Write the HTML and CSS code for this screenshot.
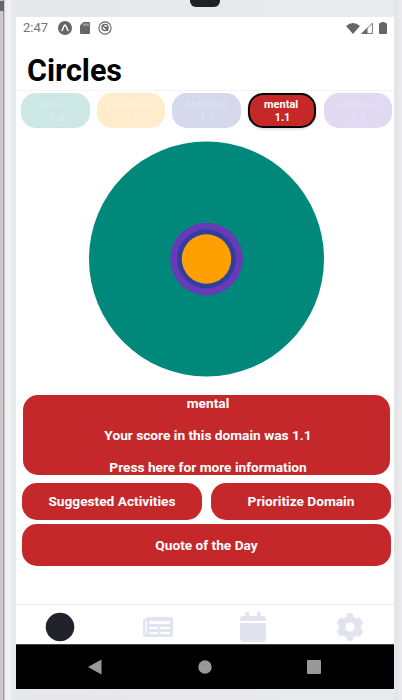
FILE: index.html
```html
<!DOCTYPE html>
<html lang="en">
<head>
<meta charset="utf-8">
<title>Circles</title>
<link rel="stylesheet" href="styles.css">
</head>
<body>
<div class="device">
  <div class="bezel"><div class="camera"></div></div>
  <main class="screen">
    <div class="status">
      <span class="time">2:47</span>
      <svg class="st-expo" width="14" height="14" viewBox="0 0 14 14"><circle cx="7" cy="7" r="7" fill="#666"/><path d="M3.800 10 L6.400 4.200 H7.600 L10.200 10" fill="none" stroke="#fff" stroke-width="1.500" stroke-linejoin="round"/></svg>
      <svg class="st-sd" width="10" height="12" viewBox="0 0 10 12"><path d="M3.500 0H9a1 1 0 0 1 1 1v10a1 1 0 0 1-1 1H1a1 1 0 0 1-1-1V3.500z" fill="#666"/><path d="M4 1.500v2.300M6 1.500v2.300M8 1.500v2.300" stroke="#ddd" stroke-width=".9"/></svg>
      <svg class="st-sync" width="14" height="14" viewBox="0 0 14 14" fill="none" stroke="#666"><circle cx="7" cy="7" r="6.100" stroke-width="1.100"/><circle cx="7" cy="6.500" r="3.100" stroke-width="1.300"/><path d="M4.800 4.500l5.400 5.200M7 6.500h2.500" stroke-width="1.300"/></svg>
      <svg class="st-wifi" width="14" height="11" viewBox="0 0 14 11"><path d="M0 3Q7-3 14 3L7 11z" fill="#666"/></svg>
      <svg class="st-cell" width="12" height="12" viewBox="0 0 12 12"><path d="M1.200 11.400H11.400V1.200z" fill="none" stroke="#777" stroke-width="1"/><path d="M0 12h6.500V5.500z" fill="#666"/></svg>
      <svg class="st-batt" width="8" height="12" viewBox="0 0 8 12"><path d="M2.200 0h3.600v1H7a1 1 0 0 1 1 1v9a1 1 0 0 1-1 1H1a1 1 0 0 1-1-1V2a1 1 0 0 1 1-1h1.200z" fill="#666"/></svg>
    </div>
    <h1 class="title">Circles</h1>
    <div class="chips">
      <div class="chip social">social<br>&nbsp;&nbsp;6.8</div>
      <div class="chip emotional">emotional<br>&nbsp;&nbsp;1.4</div>
      <div class="chip physical">physical<br>&nbsp;1.7</div>
      <div class="chip mental">mental<br>&nbsp;1.1</div>
      <div class="chip spiritual">spiritual<br>&nbsp;2.1</div>
    </div>
    <svg class="chart" width="237" height="236" viewBox="0 0 237 236">
      <circle cx="118.500" cy="118" r="117.500" fill="#00897b"/>
      <circle cx="118.500" cy="118" r="36.300" fill="#673ab7"/>
      <circle cx="118.500" cy="118" r="29.500" fill="#303f9f"/>
      <circle cx="118.500" cy="118" r="24.700" fill="#ffa000"/>
    </svg>
    <div class="btn info"><span>mental</span><span>Your score in this domain was 1.1</span><span>Press here for more information</span></div>
    <div class="pair">
      <div class="btn">Suggested Activities</div>
      <div class="btn">Prioritize Domain</div>
    </div>
    <div class="btn quote">Quote of the Day</div>
    <nav class="tabs">
      <svg width="30" height="40" viewBox="0 0 30 40"><circle cx="15" cy="22" r="14.300" fill="#22222d"/></svg>
      <svg width="30" height="40" viewBox="0 0 30 40"><path fill="#e1e3ef" fill-rule="evenodd" d="M5 12H28a2 2 0 0 1 2 2V30a2 2 0 0 1-2 2H3a3 3 0 0 1-3-3V15a1 1 0 0 1 1-1h2a2 2 0 0 1 2-2zM2.500 16v12.500a.6.6 0 0 0 1.200 0V16zM6.500 16v3H27v-3zM6.500 22v2h8.700v-2zM17.500 22v2h9.500v-2zM6.500 27v2h8.700v-2zM17.500 27v2h9.500v-2z"/></svg>
      <svg width="26" height="40" viewBox="0 0 26 40"><path fill="#e1e3ef" d="M0 16v-2a3 3 0 0 1 3-3h2.500V8a1 1 0 0 1 1-1h1.500a1 1 0 0 1 1 1v3h8V8a1 1 0 0 1 1-1h1.500a1 1 0 0 1 1 1v3H23a3 3 0 0 1 3 3v2zM0 18H26V34a3 3 0 0 1-3 3H3a3 3 0 0 1-3-3z"/></svg>
      <svg width="28" height="40" viewBox="0 -6 28 40"><path fill="#e1e3ef" fill-rule="evenodd" d="M11.200 2.600Q14 1.400 16.800 2.600L17.400 6 Q19 6.600 20.300 7.600L23.500 6.400Q26.500 9 27.300 12.200L24.700 14.500Q25 16.200 24.700 17.700L27.300 19.900Q26.300 23.200 23.700 25.700L20.300 24.600Q19 25.600 17.400 26.200L16.800 29.500Q14 30.200 11.200 29.500L10.600 26.200Q9 25.600 7.700 24.600L4.300 25.700Q1.700 23.200.7 19.900L3.300 17.700Q3 16.200 3.300 14.500L.7 12.200Q1.500 9 4.500 6.400L7.700 7.600Q9 6.600 10.600 6zM14 11.500a4.600 4.600 0 1 0 .01 0z"/></svg>
    </nav>
    <div class="sysnav">
      <svg width="14" height="16" viewBox="0 0 14 16"><path d="M0 8L13.500.5v15z" fill="#999"/></svg>
      <svg width="14" height="14" viewBox="0 0 14 14"><circle cx="7" cy="7" r="6.700" fill="#999"/></svg>
      <svg width="14" height="14" viewBox="0 0 14 14"><rect width="14" height="14" rx="1" fill="#999"/></svg>
    </div>
  </main>
</div>
</body>
</html>
```
FILE: styles.css
```css
* { box-sizing: border-box; }
body { margin: 0; font-family: Roboto, sans-serif; }
.device {
  width: 402px;
  height: 700px;
  padding: 0 8px 0 16px;
  overflow: hidden;
  background:
    linear-gradient(#67656b, #67656b) 0 1px / 4px 10px no-repeat,
    linear-gradient(90deg, #c9c1c4 0, #d3cdd0 3px, #8f898c 3px, #a9a4a7 4px, #eeeef0 5px, #f2f2f4 9px, #e7e8ea 14px, #e9eaec 394px, #e3e4e7 395px, #ececef 402px);
}
.bezel { height: 17px; padding-left: 174px; }
.camera { width: 30px; height: 7px; border-radius: 0 0 6px 6px; background: #202126; }
.screen {
  width: 378px;
  height: 672px;
  display: flex;
  flex-direction: column;
  background: #fff;
}
.status { height: 22px; display: flex; align-items: center; padding: 0 7px; color: #737373; }
.time { width: 35px; font-size: 13px; line-height: 22px; }
.st-sd { margin-left: 8px; }
.st-sync { margin-left: 8px; }
.st-wifi { margin-left: auto; }
.st-cell { margin-left: 1px; }
.st-batt { margin-left: 6px; }
.title {
  height: 52px;
  margin: 0;
  padding: 14px 0 0 11px;
  border-bottom: 1px solid #f4f4f6;
  font-size: 30.500px;
  line-height: 35px;
  font-weight: 700;
  color: #000;
}
.chips { display: flex; justify-content: space-between; padding: 2px 2px 0 5px; }
.chip {
  width: 68.500px;
  height: 35px;
  padding: 6px 2px 0 0;
  border-radius: 15px;
  text-align: center;
  font-size: 11px;
  line-height: 12.500px;
  font-weight: 700;
  color: rgba(255, 255, 255, .2);
}
.social { background: #cce7e4; }
.emotional { background: #ffeccc; }
.physical { background: #d6d9ec; }
.spiritual { background: #e1d8f1; }
.mental {
  padding-top: 4px;
  border: 2px solid #000;
  background: #c62828;
  color: #fff;
  box-shadow: 0 1px 3px rgba(0, 0, 0, .18);
}
.chart { display: block; flex: none; margin: 13px 0 0 72px; }
.btn {
  display: flex;
  align-items: center;
  justify-content: center;
  border-radius: 15px;
  background: #c5282b;
  color: #fff;
  font-size: 13.700px;
  font-weight: 700;
}
.info {
  flex-direction: column;
  gap: 16px;
  height: 79.500px;
  margin: 18px 4px 0 7px;
  padding: 1px 0 0 3px;
  line-height: 16px;
  overflow: hidden;
}
.pair { display: flex; gap: 9px; height: 37px; margin: 8px 3px 0 6px; }
.pair .btn { flex: 1; }
.quote { height: 42px; margin: 4px 3px 0 6px; }
.tabs {
  height: 40px;
  margin-top: auto;
  display: flex;
  justify-content: space-between;
  padding: 0 30px 0 29px;
  border-top: 1px solid #e8e8ef;
}
.tabs svg:nth-child(2),
.tabs svg:nth-child(3) { margin-left: -2px; }
.sysnav {
  height: 45px;
  display: flex;
  align-items: center;
  justify-content: space-between;
  padding: 0 73px 0 72px;
  border-top: 1px solid #444;
  background: #000;
}
```
